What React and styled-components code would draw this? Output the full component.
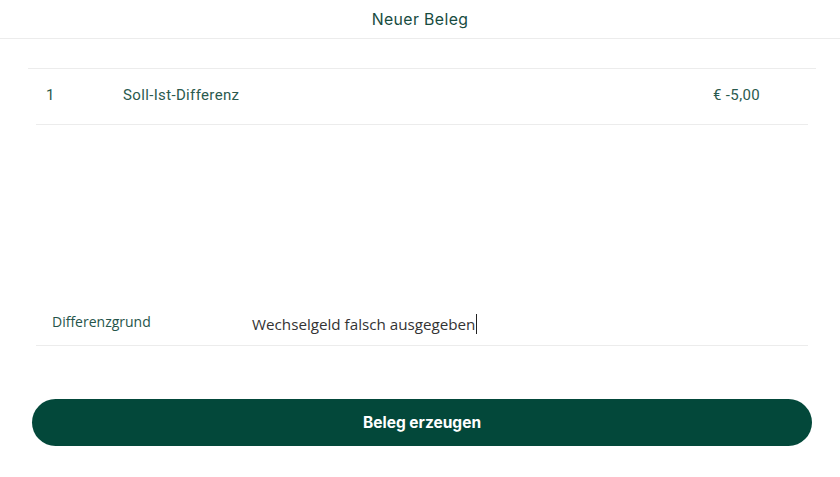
import styled, { createGlobalStyle } from 'styled-components'

const GlobalStyle = createGlobalStyle`
  body {
    margin: 0;
    background: #ffffff;
    font-family: Roboto, "Liberation Sans", sans-serif;
    color: #1d4f42;
  }
`

const Page = styled.div`
  width: 840px;
  height: 477px;
  display: flex;
  flex-direction: column;
`

const Header = styled.div`
  height: 38px;
  border-bottom: 1px solid #ececec;
  display: flex;
  align-items: center;
  justify-content: center;
  font-family: Inter, "Noto Sans", sans-serif;
  font-size: 15.8px;
  font-weight: 400;
  color: #174c3f;
  letter-spacing: 0.4px;
`

const Table = styled.div`
  margin: 29px 24px 0 28px;
  border-top: 1px solid #ececec;
`

const Row = styled.div`
  height: 56px;
  box-sizing: border-box;
  padding-bottom: 3px;
  margin: 0 8px;
  border-bottom: 1px solid #ececec;
  display: grid;
  grid-template-columns: 87px 1fr 95px;
  align-items: center;
  font-size: 15px;
  letter-spacing: 0.35px;
  color: #2a5a4e;
`

const Cell = styled.div`
  padding-left: ${(p) => p.$indent || 0}px;
  white-space: nowrap;
`

const Spacer = styled.div`
  flex: 0 0 175px;
`

const ReasonRow = styled.div`
  height: 45px;
  margin: 0 32px 0 36px;
  border-bottom: 1px solid #ececec;
  display: grid;
  grid-template-columns: 216px 1fr;
  align-items: center;
`

const Label = styled.div`
  padding-left: 16px;
  font-family: "Open Sans", "Noto Sans", sans-serif;
  font-size: 14px;
  color: #25544a;
  margin-top: -2px;
`

const Value = styled.div`
  font-family: "Open Sans", "Noto Sans", sans-serif;
  font-size: 15.2px;
  color: #333333;
  display: flex;
  align-items: center;
  margin-top: 3px;
`

const Caret = styled.span`
  display: inline-block;
  width: 1px;
  height: 20px;
  background: #222;
  margin-left: 1px;
`

const SubmitButton = styled.button`
  margin: 53px 28px 0 32px;
  height: 47px;
  border: none;
  border-radius: 24px;
  background: #03483a;
  color: #ffffff;
  font-family: Inter, "Noto Sans", sans-serif;
  font-size: 15.5px;
  font-weight: 700;
  cursor: pointer;
`

const App = () => {
  return (
    <>
      <GlobalStyle />
      <Page>
        <Header>Neuer Beleg</Header>
        <Table>
          <Row>
            <Cell $indent={10}>1</Cell>
            <Cell>Soll-Ist-Differenz</Cell>
            <Cell>€ -5,00</Cell>
          </Row>
        </Table>
        <Spacer />
        <ReasonRow>
          <Label>Differenzgrund</Label>
          <Value>
            Wechselgeld falsch ausgegeben
            <Caret />
          </Value>
        </ReasonRow>
        <SubmitButton>Beleg erzeugen</SubmitButton>
      </Page>
    </>
  )
}

export default App
